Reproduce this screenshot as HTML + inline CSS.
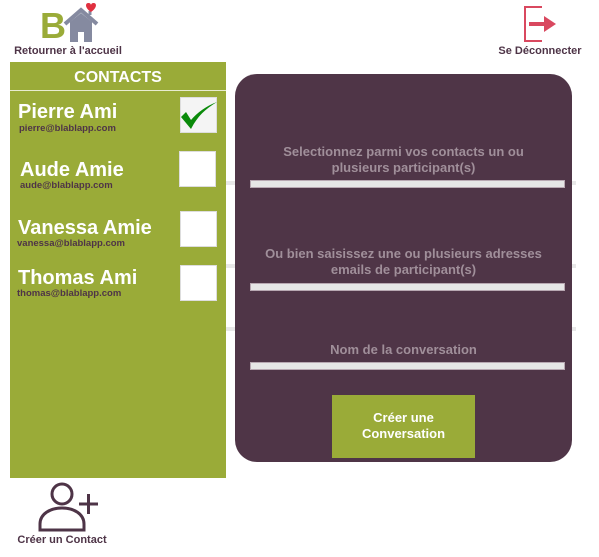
<!DOCTYPE html>
<html><head><meta charset="utf-8"><style>
*{margin:0;padding:0;box-sizing:border-box}
body{width:599px;height:557px;background:#fff;position:relative;overflow:hidden;font-family:"Liberation Sans",Arial,sans-serif;font-weight:bold}
.a{position:absolute}
.lbl{color:#4e3447;font-size:11px;text-align:center;white-space:nowrap}
.gl{position:absolute;height:4px;background:#e8e8e8;left:226px;width:350px}
.name{position:absolute;left:18px;color:#fff;font-size:20px;white-space:nowrap}
.mail{position:absolute;color:#4e3447;font-size:9.5px;white-space:nowrap}
.box{position:absolute;width:37px;height:36px;background:#fff;border:1px solid #ddd}
.t{position:absolute;left:235px;width:337px;text-align:center;color:#a08f9a;font-size:13px;line-height:16px}
.bar{position:absolute;left:250px;width:315px;height:8px;background:#e6e6e6;border:1px solid #b8a8b2}
</style></head><body>
<div class="a" style="left:40px;top:8px;font-size:36px;color:#9aab38;line-height:36px">B</div>
<svg class="a" style="left:62px;top:2px" width="40" height="42" viewBox="0 0 40 42">
<path d="M3 22 L19 8 L35 22" fill="none" stroke="#858aa0" stroke-width="4"/>
<path d="M8 20 L19 11 L30 20 V40 H22 V30 H16 V40 H8 Z" fill="#858aa0"/>
<path d="M28 9 l0 4" stroke="#858aa0" stroke-width="3"/>
<path d="M29 10 C23 6 23 1.5 26 1 C28 0.8 29 2 29 3 C29 2 30 0.8 32 1 C35 1.5 35 6 29 10Z" fill="#e03040"/>
</svg>
<div class="a lbl" style="left:8px;top:45px;width:120px">Retourner à l'accueil</div>
<svg class="a" style="left:520px;top:5px" width="40" height="40" viewBox="0 0 40 40">
<path d="M22 2 H5 V36 H22" fill="none" stroke="#d9485f" stroke-width="2"/>
<path d="M9 19 H26" stroke="#d9485f" stroke-width="4"/>
<path d="M24 11 L36 19 L24 27Z" fill="#d9485f"/>
</svg>
<div class="a lbl" style="left:490px;top:45px;width:100px">Se Déconnecter</div>

<div class="gl" style="top:181px"></div>
<div class="gl" style="top:264px"></div>
<div class="gl" style="top:327px"></div>

<div class="a" style="left:10px;top:62px;width:216px;height:416px;background:#9aab38"></div>
<div class="a" style="left:10px;top:69px;width:216px;text-align:center;color:#fff;font-size:16px">CONTACTS</div>
<div class="a" style="left:10px;top:90px;width:216px;height:1px;background:#e8ecd0"></div>
<div class="name" style="top:101px">Pierre Ami</div><div class="mail" style="left:19px;top:123px">pierre@blablapp.com</div>
<div class="box" style="left:180px;top:97px;background:#f4f4f4"></div>
<svg class="a" style="left:180px;top:100px" width="38" height="32" viewBox="0 0 38 32"><path d="M1 17 L11 29 C17 17 25 9 37 2 C26 6 17 13 11 20 L6 12Z" fill="#0a8a0a"/></svg>
<div class="name" style="top:159px;left:20px">Aude Amie</div><div class="mail" style="left:20px;top:180px">aude@blablapp.com</div>
<div class="box" style="left:179px;top:151px"></div>
<div class="name" style="top:217px">Vanessa Amie</div><div class="mail" style="left:17px;top:238px">vanessa@blablapp.com</div>
<div class="box" style="left:180px;top:211px"></div>
<div class="name" style="top:267px">Thomas Ami</div><div class="mail" style="left:17px;top:288px">thomas@blablapp.com</div>
<div class="box" style="left:180px;top:265px"></div>

<svg class="a" style="left:36px;top:482px" width="64" height="50" viewBox="0 0 64 50">
<circle cx="26" cy="12" r="10" fill="none" stroke="#4e3447" stroke-width="3"/>
<path d="M4 48 V42 C4 32 14 26 26 26 C38 26 48 32 48 42 V48 Z" fill="none" stroke="#4e3447" stroke-width="3"/>
<path d="M43 22 H62 M52.5 12 V32" stroke="#4e3447" stroke-width="3"/>
</svg>
<div class="a lbl" style="left:2px;top:534px;width:120px">Créer un Contact</div>

<div class="a" style="left:235px;top:74px;width:337px;height:388px;background:#4f3547;border-radius:22px"></div>
<div class="t" style="top:144px">Selectionnez parmi vos contacts un ou<br>plusieurs participant(s)</div>
<div class="bar" style="top:180px"></div>
<div class="t" style="top:246px">Ou bien saisissez une ou plusieurs adresses<br>emails de participant(s)</div>
<div class="bar" style="top:283px"></div>
<div class="t" style="top:342px">Nom de la conversation</div>
<div class="bar" style="top:362px"></div>
<div class="a" style="left:332px;top:395px;width:143px;height:63px;background:#9aab38;color:#fff;font-size:13px;text-align:center;line-height:16px;padding-top:15px">Créer une<br>Conversation</div>
</body></html>
